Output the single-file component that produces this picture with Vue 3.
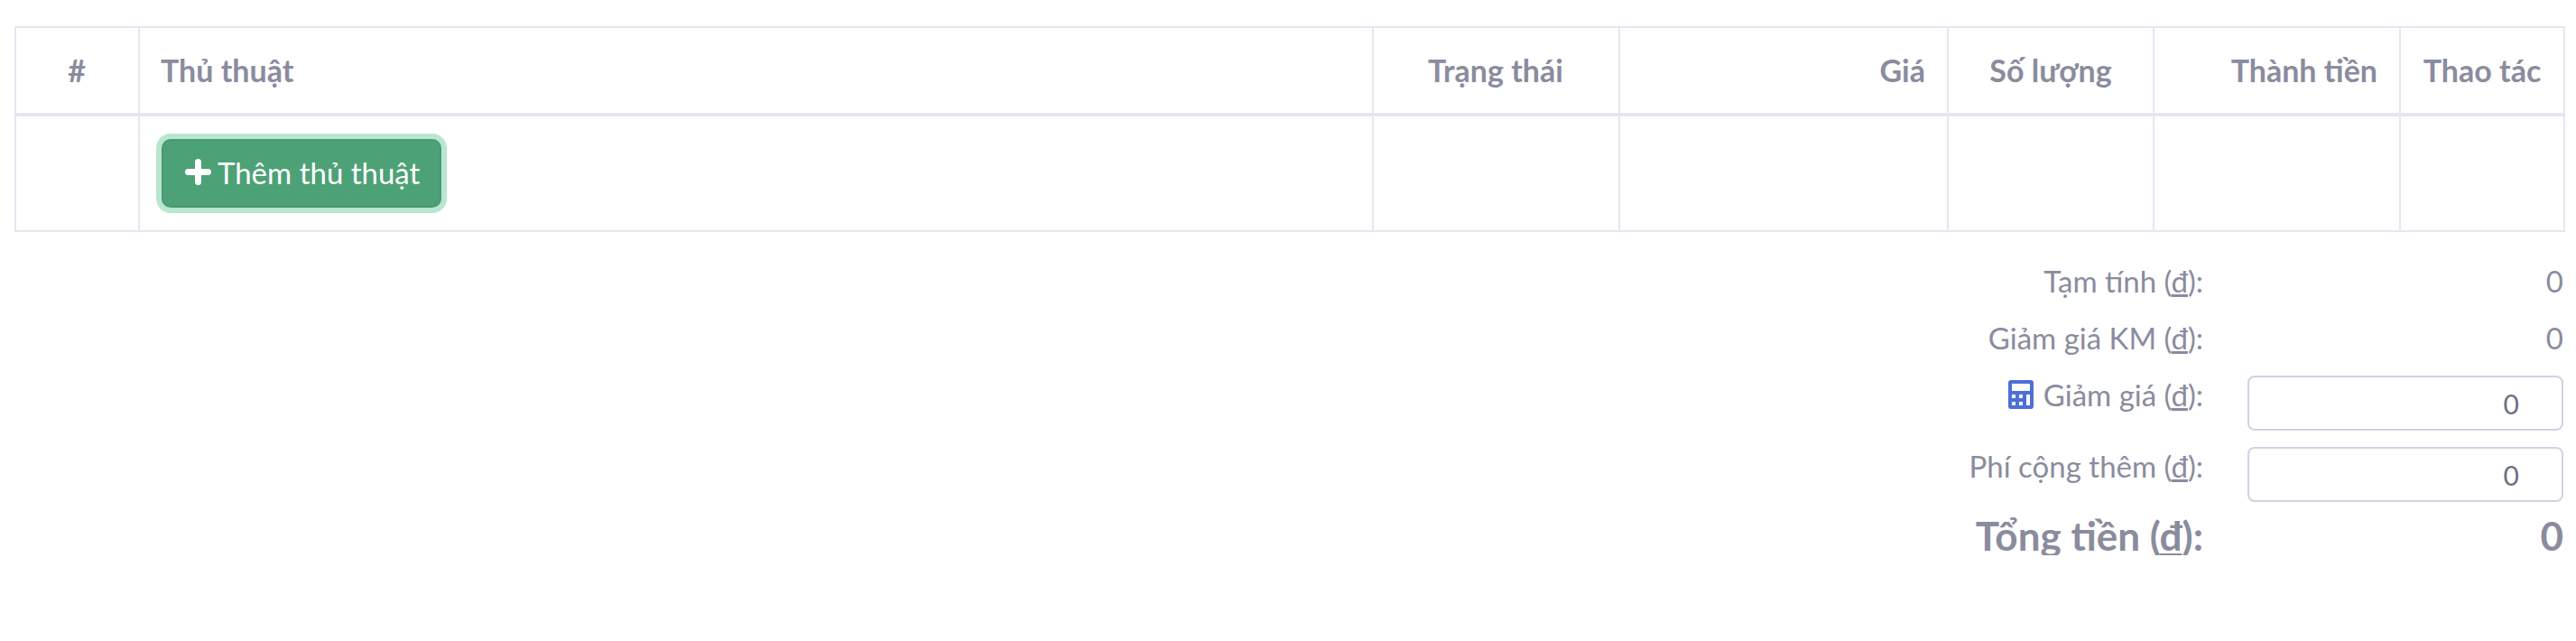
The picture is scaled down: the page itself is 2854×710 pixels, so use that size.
<script setup>
const columns = [
  { label: '#', cls: 'col-index center' },
  { label: 'Thủ thuật', cls: 'col-name' },
  { label: 'Trạng thái', cls: 'col-status center' },
  { label: 'Giá', cls: 'col-price right' },
  { label: 'Số lượng', cls: 'col-qty center' },
  { label: 'Thành tiền', cls: 'col-total right' },
  { label: 'Thao tác', cls: 'col-action center' }
]
</script>

<template>
  <div class="page">
    <table class="items">
      <colgroup>
        <col v-for="col in columns" :key="col.label" :class="col.cls" />
      </colgroup>
      <thead>
        <tr>
          <th v-for="col in columns" :key="col.label" :class="col.cls">{{ col.label }}</th>
        </tr>
      </thead>
      <tbody>
        <tr>
          <td></td>
          <td>
            <button class="add-button" type="button">
              <svg class="plus" viewBox="0 0 29 29" aria-hidden="true">
                <path d="M14.5 3.5v22M3.5 14.5h22" />
              </svg>
              Thêm thủ thuật
            </button>
          </td>
          <td></td>
          <td></td>
          <td></td>
          <td></td>
          <td></td>
        </tr>
      </tbody>
    </table>

    <div class="summary">
      <div class="row">
        <div class="label">Tạm tính (<u>đ</u>):</div>
        <div class="value">0</div>
      </div>
      <div class="row">
        <div class="label">Giảm giá KM (<u>đ</u>):</div>
        <div class="value">0</div>
      </div>
      <div class="row">
        <div class="label">
          <svg class="calc" viewBox="0 0 28 32" aria-hidden="true">
            <path fill-rule="evenodd" d="M3 0h22a3 3 0 0 1 3 3v26a3 3 0 0 1-3 3H3a3 3 0 0 1-3-3V3a3 3 0 0 1 3-3zM4 4v8h20V4zM4 16v4h4v-4zm8 0v4h4v-4zm8 0v12h4V16zM4 24v4h4v-4zm8 0v4h4v-4z" />
          </svg>
          Giảm giá (<u>đ</u>):
        </div>
        <div class="value"><input class="amount" type="text" value="0" /></div>
      </div>
      <div class="row">
        <div class="label">Phí cộng thêm (<u>đ</u>):</div>
        <div class="value"><input class="amount" type="text" value="0" /></div>
      </div>
      <div class="row total">
        <div class="label">Tổng tiền (<u>đ</u>):</div>
        <div class="value">0</div>
      </div>
    </div>
  </div>
</template>

<style>
body {
  background: #fff;
}
</style>

<style scoped>
.page {
  padding: 29px 14px 0 16px;
  font-family: "Lato", "Noto Sans", sans-serif;
  color: #8a8c9e;
}

.items {
  width: 2824px;
  border-collapse: collapse;
  table-layout: fixed;
}

.items th,
.items td {
  border: 2px solid #e4e6f1;
}

.items th {
  height: 92px;
  padding: 0 24px 2px 23px;
  border-bottom-width: 4px;
  font-size: 34px;
  font-weight: 700;
  text-align: left;
}

.items td {
  height: 126px;
  padding: 0 24px;
}

.col-index { width: 137px; }
.col-name { width: 1367px; }
.col-status { width: 273px; }
.col-price { width: 364px; }
.col-qty { width: 228px; }
.col-total { width: 273px; }
.col-action { width: 182px; }

.items th.center { text-align: center; }
.items th.right { text-align: right; }

.items th.col-action,
.items th.col-qty {
  padding: 0 0 2px;
}

.add-button {
  display: flex;
  align-items: center;
  gap: 7px;
  width: 310px;
  height: 76px;
  padding: 0 0 3px 24px;
  border: 2px solid #4a9870;
  border-radius: 10px;
  background: #4da176;
  box-shadow: 0 0 0 6px #b8e6d0;
  color: #fff;
  font: 400 33px "Lato", "Noto Sans", sans-serif;
  white-space: nowrap;
}

.plus {
  flex: none;
  width: 29px;
  height: 29px;
  fill: none;
  stroke: #fff;
  stroke-width: 7;
  stroke-linecap: round;
}

.summary {
  margin-top: 33px;
  font-size: 33px;
}

.row {
  display: flex;
  justify-content: flex-end;
  margin-bottom: 18px;
}

.label {
  line-height: 43px;
  text-align: right;
}

.row:nth-child(-n+2) {
  height: 45px;
}

.row:nth-child(4) {
  margin-bottom: 16px;
}

.value {
  width: 350px;
  margin-left: 49px;
  line-height: 43px;
  text-align: right;
}

.calc {
  width: 28px;
  height: 32px;
  margin-right: 2px;
  vertical-align: -3px;
  fill: #4e6fd8;
}

.amount {
  display: block;
  box-sizing: border-box;
  width: 100%;
  height: 61px;
  padding: 0 47px 0 16px;
  border: 2px solid #d0d3e4;
  border-radius: 8px;
  color: #6e7085;
  font: 400 30px "Lato", "Noto Sans", sans-serif;
  text-align: right;
  outline: none;
}

.total {
  margin-bottom: 0;
  font-size: 44px;
  font-weight: 700;
}
</style>
